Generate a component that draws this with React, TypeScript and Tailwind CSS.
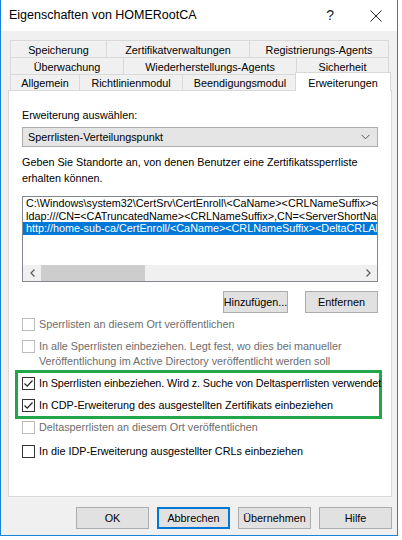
import React from 'react';

type CheckProps = { checked?: boolean; disabled?: boolean };

const CheckBox: React.FC<CheckProps> = ({ checked, disabled }) => (
  <span
    className={`w-[13px] h-[13px] border bg-white shrink-0 flex items-center justify-center ${
      disabled ? 'border-[#bcbcbc]' : 'border-[#333333]'
    }`}
  >
    {checked && (
      <svg width="11" height="11" viewBox="0 0 11 11">
        <path d="M1.5 5.5 L4.2 8.2 L9.5 2.5" stroke="#222" strokeWidth="1.2" fill="none" />
      </svg>
    )}
  </span>
);

const CheckRow: React.FC<CheckProps & { lines: string[]; className?: string }> = ({
  checked,
  disabled,
  lines,
  className = '',
}) => (
  <div className={`flex items-start gap-[4px] ${className}`}>
    <span className="mt-[1px]">
      <CheckBox checked={checked} disabled={disabled} />
    </span>
    <div className={`leading-[15px] ${disabled ? 'text-[#6d6d6d]' : 'text-black'}`}>
      {lines.map((l) => (
        <div key={l} className="whitespace-nowrap">{l}</div>
      ))}
    </div>
  </div>
);

const Tab: React.FC<{ label: string; w: string }> = ({ label, w }) => (
  <div
    className={`${w} h-full border-t border-l border-r border-[#d9d9d9] bg-[#f0f0f0] -mr-px pt-[2px] flex items-center justify-center whitespace-nowrap`}
  >
    {label}
  </div>
);

const Btn: React.FC<{ label: string; w: string; focus?: boolean }> = ({ label, w, focus }) => (
  <div
    className={`${w} h-[22px] flex items-center justify-center bg-[#e1e1e1] ${
      focus ? 'border-2 border-[#0078d7]' : 'border border-[#adadad]'
    }`}
  >
    {label}
  </div>
);

export default function App() {
  return (
    <div className="w-[402px] h-[540px] bg-white font-['Liberation_Sans',Arial,sans-serif] text-[10.8px] text-black">
      <div className="w-[398px] h-[536px] border-l border-r border-b border-[#1883d7] flex flex-col">
        {/* title bar */}
        <div className="h-[31px] bg-white flex items-center pl-[8px] shrink-0">
          <span className="text-[12.5px] text-black">Eigenschaften von HOMERootCA</span>
          <span className="ml-auto mr-[36px] text-[14px] text-[#222]">?</span>
          <svg width="12" height="12" viewBox="0 0 12 12" className="mr-[15px]">
            <path d="M0.5 0.5 L11.5 11.5 M11.5 0.5 L0.5 11.5" stroke="#222" strokeWidth="1" />
          </svg>
        </div>

        {/* body */}
        <div className="flex-1 bg-[#f0f0f0] pl-[7px] pr-[5px] pt-[9px] flex flex-col">
          {/* tabs */}
          <div className="pl-[2px] flex flex-col">
            <div className="h-[17px] flex">
              <Tab label="Speicherung" w="w-[97px]" />
              <Tab label="Zertifikatverwaltungen" w="w-[144px]" />
              <Tab label="Registrierungs-Agents" w="w-[140px]" />
            </div>
            <div className="h-[17px] flex">
              <Tab label="Überwachung" w="w-[114px]" />
              <Tab label="Wiederherstellungs-Agents" w="w-[174px]" />
              <Tab label="Sicherheit" w="w-[93px]" />
            </div>
            <div className="h-[16px] flex items-end">
              <Tab label="Allgemein" w="w-[70px]" />
              <Tab label="Richtlinienmodul" w="w-[104px]" />
              <Tab label="Beendigungsmodul" w="w-[116px]" />
              <div className="w-[96px] h-[19px] -ml-[2px] -mb-px relative z-10 border-t border-l border-r border-[#d9d9d9] bg-white flex items-start justify-center pt-[2px] whitespace-nowrap">
                Erweiterungen
              </div>
            </div>
          </div>

          {/* panel */}
          <div className="h-[407px] bg-white border border-[#d9d9d9] pl-[13px] pr-[13px] pt-[17px] flex flex-col">
            <div className="leading-[15px]">Erweiterung auswählen:</div>
            <div className="mt-[4px] h-[20px] bg-[#e5e5e5] border border-[#adadad] flex items-center pl-[5px] pr-[7px]">
              <span>Sperrlisten-Verteilungspunkt</span>
              <svg width="9" height="6" viewBox="0 0 9 6" className="ml-auto">
                <path d="M0.5 0.8 L4.5 4.8 L8.5 0.8" stroke="#555" strokeWidth="1" fill="none" />
              </svg>
            </div>
            <div className="mt-[7px] leading-[16px]">
              <div className="whitespace-nowrap">Geben Sie Standorte an, von denen Benutzer eine Zertifikatssperrliste</div>
              <div>erhalten können.</div>
            </div>

            {/* list box */}
            <div className="mt-[10px] h-[86px] border border-[#828790] bg-white flex flex-col overflow-hidden">
              <div className="h-[68px] leading-[12.5px] overflow-hidden">
                <div className="pl-[3px] whitespace-nowrap">C:\Windows\system32\CertSrv\CertEnroll\&lt;CaName&gt;&lt;CRLNameSuffix&gt;&lt;DeltaCRLAllowed&gt;.crl</div>
                <div className="pl-[3px] whitespace-nowrap">ldap:///CN=&lt;CATruncatedName&gt;&lt;CRLNameSuffix&gt;,CN=&lt;ServerShortName&gt;,CN=CDP,CN=Public Key Services</div>
                <div className="pl-[3px] whitespace-nowrap bg-[#0078d7] text-white">http://home-sub-ca/CertEnroll/&lt;CaName&gt;&lt;CRLNameSuffix&gt;&lt;DeltaCRLAllowed&gt;.crl</div>
              </div>
              <div className="mt-auto h-[16px] bg-[#f0f0f0] flex items-center">
                <div className="w-[18px] flex justify-center">
                  <svg width="5" height="8" viewBox="0 0 5 8">
                    <path d="M4.5 0.5 L1 4 L4.5 7.5" stroke="#606060" strokeWidth="1.3" fill="none" />
                  </svg>
                </div>
                <div className="w-[104px] h-full bg-[#cdcdcd]" />
                <div className="ml-auto w-[17px] flex justify-center">
                  <svg width="5" height="8" viewBox="0 0 5 8">
                    <path d="M0.5 0.5 L4 4 L0.5 7.5" stroke="#606060" strokeWidth="1.3" fill="none" />
                  </svg>
                </div>
              </div>
            </div>

            <div className="mt-[9px] flex justify-end gap-[17px]">
              <Btn label="Hinzufügen..." w="w-[65px]" />
              <Btn label="Entfernen" w="w-[73px]" />
            </div>

            <CheckRow disabled lines={['Sperrlisten an diesem Ort veröffentlichen']} className="mt-[4px]" />
            <CheckRow
              disabled
              lines={[
                'In alle Sperrlisten einbeziehen. Legt fest, wo dies bei manueller',
                'Veröffentlichung im Active Directory veröffentlicht werden soll',
              ]}
              className="mt-[7px]"
            />

            <div className="mt-[1px] ml-[-7px] mr-[-4px] border-[3px] border-[#22a64a] pl-[4px] pt-[3px] pb-[3px] flex flex-col gap-[7px]">
              <CheckRow
                checked
                lines={['In Sperrlisten einbeziehen. Wird z. Suche von Deltasperrlisten verwendet']}
                className="tracking-[-0.1px]"
              />
              <CheckRow checked lines={['In CDP-Erweiterung des ausgestellten Zertifikats einbeziehen']} />
            </div>

            <CheckRow disabled lines={['Deltasperrlisten an diesem Ort veröffentlichen']} className="mt-[1px]" />
            <CheckRow lines={['In die IDP-Erweiterung ausgestellter CRLs einbeziehen']} className="mt-[9px]" />
          </div>

          {/* bottom buttons */}
          <div className="mt-[10px] flex justify-end gap-[8px]">
            <Btn label="OK" w="w-[73px]" />
            <Btn label="Abbrechen" w="w-[73px]" focus />
            <Btn label="Übernehmen" w="w-[73px]" />
            <Btn label="Hilfe" w="w-[73px]" />
          </div>
        </div>
      </div>
    </div>
  );
}
